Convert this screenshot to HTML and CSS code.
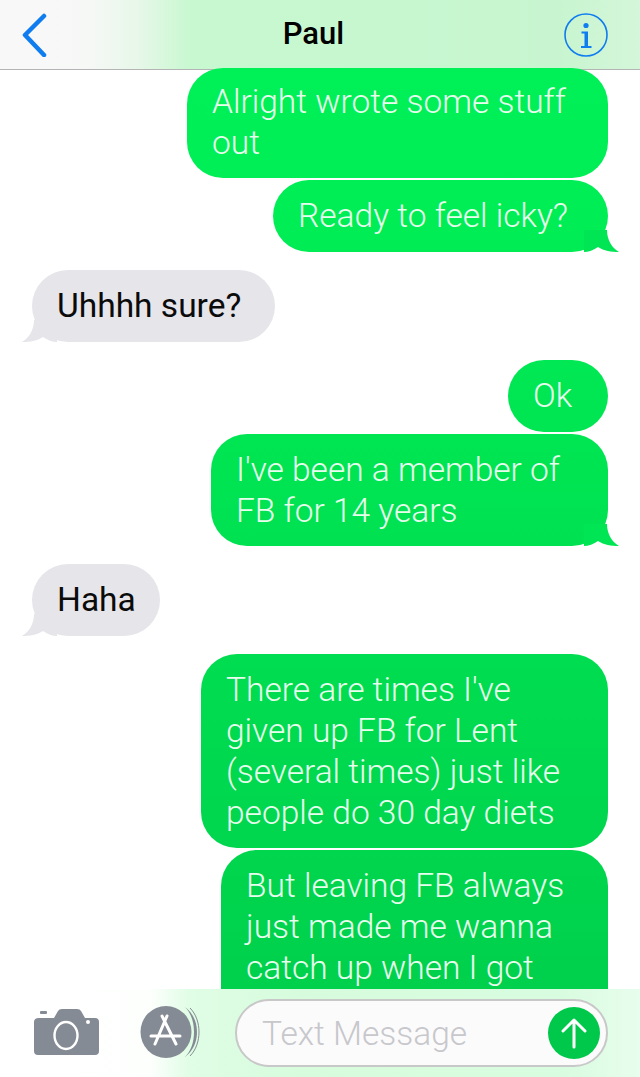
FILE: index.html
```html
<!DOCTYPE html>
<html lang="en">
<head>
<meta charset="utf-8">
<title>Paul</title>
<link rel="stylesheet" href="styles.css">
</head>
<body>
<div class="phone">
  <header class="nav">
    <svg class="back" width="26" height="44" viewBox="0 0 26 44"><path d="M23 3 L4 22 L23 42" fill="none" stroke="#0f7cf0" stroke-width="4.5" stroke-linecap="round" stroke-linejoin="round"/></svg>
    <h1 class="title">Paul</h1>
    <svg class="info" width="44" height="46" viewBox="0 0 44 46"><circle cx="22" cy="23" r="21" fill="none" stroke="#0f7cf0" stroke-width="1.6"/><circle cx="22" cy="13.5" r="2.6" fill="#0f7cf0"/><path d="M17.5 19.5h6.5v14.5h3.5v2h-10.500v-2h3.500v-12.500h-3z" fill="#0f7cf0"/></svg>
  </header>
  <main class="thread">
    <div class="bubble out w1 first">Alright wrote some stuff<br>out</div>
    <div class="bubble out w2 tail-wrap">Ready to feel icky?<svg class="tail tail-out" width="36" height="22" viewBox="0 0 36 22"><path d="M0 0H23C23 10 28 18 35 22C27 22 20 21 14 17C10 20 4 22 0 22Z"/></svg></div>
    <div class="bubble in w3 gap">Uhhhh sure?<svg class="tail tail-in" width="36" height="22" viewBox="0 0 36 22"><path d="M36 0H13C13 10 8 18 1 22C9 22 16 21 22 17C26 20 32 22 36 22Z"/></svg></div>
    <div class="bubble out w4 gap">Ok</div>
    <div class="bubble out w5">I've been a member of<br>FB for 14 years<svg class="tail tail-out" width="36" height="22" viewBox="0 0 36 22"><path d="M0 0H23C23 10 28 18 35 22C27 22 20 21 14 17C10 20 4 22 0 22Z"/></svg></div>
    <div class="bubble in w6 gap">Haha<svg class="tail tail-in" width="36" height="22" viewBox="0 0 36 22"><path d="M36 0H13C13 10 8 18 1 22C9 22 16 21 22 17C26 20 32 22 36 22Z"/></svg></div>
    <div class="bubble out w7 gap">There are times I've<br>given up FB for Lent<br>(several times) just like<br>people do 30 day diets</div>
    <div class="bubble out w8">But leaving FB always<br>just made me wanna<br>catch up when I got<br>back</div>
  </main>
  <footer class="composer">
    <svg class="camera" width="66" height="50" viewBox="0 0 66 50"><path d="M6 11h15l4-7q1-2 4-2h15q3 0 4 2l4 7h10q4 0 4 4v29q0 4-4 4H5q-4 0-4-4V15q0-4 5-4z" fill="#858b94"/><rect x="7" y="4" width="7" height="3" rx="1" fill="#858b94"/><ellipse cx="33" cy="28.500" rx="11.500" ry="13.500" fill="none" stroke="#fff" stroke-width="2.400"/><circle cx="55" cy="15" r="2" fill="#fff"/></svg>
    <svg class="store" width="60" height="54" viewBox="0 0 60 54"><path d="M45 2C53 8 57 17 57 27S53 46 45 52C51 46 54 37 54 27S51 8 45 2Z" fill="#858b94"/><path d="M50 3C56 9 59 18 59 27S56 45 50 51" fill="none" stroke="#858b94" stroke-width="1"/><ellipse cx="26" cy="27" rx="25.500" ry="26" fill="#858b94"/><path d="M27 11L15 39M22 11L36 39M11 31H40" fill="none" stroke="#fff" stroke-width="3" stroke-linecap="round"/></svg>
    <div class="field">
      <span class="placeholder">Text Message</span>
      <span class="send"><svg width="26" height="32" viewBox="0 0 26 32"><path d="M13 30V3M2 14L13 3L24 14" fill="none" stroke="#fff" stroke-width="3" stroke-linecap="round" stroke-linejoin="round"/></svg></span>
    </div>
  </footer>
</div>
</body>
</html>
```
FILE: styles.css
```css
html, body { margin: 0; padding: 0; background: #fff; }
.phone {
  width: 640px; height: 1077px; overflow: hidden;
  display: flex; flex-direction: column;
  font-family: Roboto, "Liberation Sans", sans-serif;
}
.nav {
  flex: none; height: 69px; box-sizing: content-box;
  border-bottom: 1px solid #b4b4b4;
  display: flex; align-items: center; justify-content: space-between;
  padding: 0 32px 0 21px;
  background: linear-gradient(90deg, #f8f8f8 0, #f6f8f6 90px, #e6f7e8 140px, #c8f8d0 190px, #c6f7cf 400px, #c8f5cf 560px, #d4f6da 640px);
}
.back { display: block; }
.title { margin: 0 0 2px 16px; font-size: 31px; font-weight: 500; color: #000; letter-spacing: 0; line-height: 1; }
.info { display: block; }
.thread {
  flex: 1; min-height: 0; overflow: hidden;
  display: flex; flex-direction: column; align-items: flex-start;
  padding: 0 32px; gap: 2px;
  margin-top: -2px;
}
.bubble {
  position: relative; flex: none; box-sizing: border-box;
  padding: 15px 25px 15px;
  border-radius: 36px;
  font-size: 33.500px; line-height: 41px; font-weight: 300;
  white-space: nowrap;
}
.out {
  align-self: flex-end; color: #e8ffee;
  background: linear-gradient(180deg, #00f158 0, #00ee55 200px, #00d04c 1000px) fixed;
}
.in { color: #0b0b0b; background: #e5e5ea; font-weight: 400; }
.gap { margin-top: 16px; }
.first { padding-top: 13px; }
.w1 { width: 421px; height: 110px; border-radius: 36px; }
.w2 { width: 335px; height: 72px; }
.w3 { width: 243px; height: 72px; }
.w4 { width: 100px; height: 72px; }
.w5 { width: 397px; height: 112px; }
.w6 { width: 128px; height: 72px; }
.w7 { width: 407px; height: 194px; }
.w8 { width: 387px; height: 194px; }
.tail { position: absolute; bottom: 0; display: block; }
.tail-out { right: -12px; }
.tail-out path { fill: #00e553; }
.tail-in { left: -11px; }
.tail-in path { fill: #e5e5ea; }
.composer {
  flex: none; height: 88px; position: relative;
  display: flex; align-items: center;
  padding: 0 32px 0 33px;
  background: linear-gradient(90deg, #fff 0, #fdfffd 150px, #e0fde5 190px, #d6fcdd 300px, #d8fcdf 560px, #e8fded 640px);
}
.camera { flex: none; margin-top: -2px; }
.store { flex: none; margin-left: 41px; margin-top: -2px; }
.field {
  flex: 1; margin-left: 35px; height: 68px; box-sizing: border-box;
  border: 2px solid #c8c8c8; border-radius: 34px; background: #fbfbfb;
  display: flex; align-items: center; justify-content: space-between;
  padding: 0 6px 0 25px;
}
.placeholder { font-size: 33.500px; font-weight: 300; color: #c7c7cc; }
.send {
  flex: none; width: 52px; height: 52px; border-radius: 50%;
  background: #00c84a; display: flex; align-items: center; justify-content: center;
}
.send svg { display: block; }
```
